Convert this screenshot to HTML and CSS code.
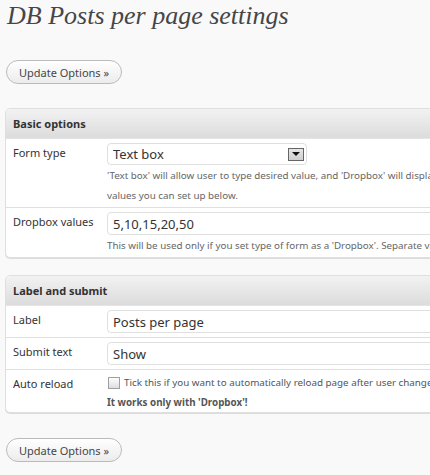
FILE: index.html
```html
<!DOCTYPE html>
<html lang="en">
<head>
  <meta charset="UTF-8" />
  <title>DB Posts per page settings</title>
  <link rel="stylesheet" href="styles.css">
</head>
<body>

<div class="wrap">
  <h2>DB Posts per page settings</h2>

  <form method="post" action="options.php">
    <p class="submit"><button type="submit" class="button">Update Options &raquo;</button></p>

    <div class="postbox">
      <h3 class="hndle">Basic options</h3>
      <table class="form-table">
        <tr>
          <th>Form type</th>
          <td>
            <div class="select-box">
              <select name="form_type">
                <option>Text box</option>
                <option>Dropbox</option>
              </select>
              <span class="select-arrow"></span>
            </div>
            <p class="description">'Text box' will allow user to type desired value, and 'Dropbox' will display list of<br>values you can set up below.</p>
          </td>
        </tr>
        <tr>
          <th>Dropbox values</th>
          <td>
            <input type="text" name="values" value="5,10,15,20,50" />
            <p class="description">This will be used only if you set type of form as a 'Dropbox'. Separate values with commas.</p>
          </td>
        </tr>
      </table>
    </div>

    <div class="postbox">
      <h3 class="hndle">Label and submit</h3>
      <table class="form-table">
        <tr>
          <th>Label</th>
          <td><input type="text" name="label" value="Posts per page" /></td>
        </tr>
        <tr>
          <th>Submit text</th>
          <td><input type="text" name="submit_text" value="Show" /></td>
        </tr>
        <tr>
          <th>Auto reload</th>
          <td>
            <label class="check"><input type="checkbox" name="auto_reload" /> Tick this if you want to automatically reload page after user changes value</label>
            <p class="note">It works only with 'Dropbox'!</p>
          </td>
        </tr>
      </table>
    </div>

    <p class="submit"><button type="submit" class="button">Update Options &raquo;</button></p>
  </form>
</div>

</body>
</html>
```

FILE: styles.css
```css
html, body {
  margin: 0;
  background: #f9f9f9;
  overflow: hidden;
}
body {
  font-family: "Noto Sans", "DejaVu Sans", sans-serif;
  font-size: 11px;
  color: #333;
}
.wrap {
  width: 760px;
  padding: 0 0 0 5px;
}
h2 {
  font-family: "Liberation Serif", Georgia, serif;
  font-style: italic;
  font-weight: normal;
  font-size: 26px;
  color: #464646;
  margin: 0;
  padding: 0 0 0 2px;
  line-height: 32px;
}
p.submit { margin: 0; }
p.submit:first-child { padding: 28px 0 24px 1px; }
.postbox + p.submit { padding: 25px 0 0 1px; }
.button {
  width: 116px;
  height: 24px;
  border: 1px solid #bbb;
  border-radius: 12px;
  background: linear-gradient(#fff, #ececec);
  font-family: "Noto Sans", sans-serif;
  font-size: 11px;
  color: #464646;
  cursor: pointer;
  padding: 0;
}
.postbox {
  background: #fff;
  border: 1px solid #dfdfdf;
  border-radius: 5px;
  box-shadow: 0 1px 0 #dcdcdc;
  overflow: hidden;
}
.postbox + .postbox { margin-top: 17px; }
.hndle {
  margin: 0;
  height: 29px;
  line-height: 29px;
  padding-left: 7px;
  font-size: 11px;
  font-weight: bold;
  color: #333;
  background: linear-gradient(#f2f2f2, #dcdcdc);
  border-bottom: 1px solid #e4e4e4;
}
.form-table {
  border-collapse: collapse;
  width: 100%;
}
.form-table th, .form-table td {
  vertical-align: top;
  border-bottom: 1px solid #dfdfdf;
}
.form-table tr:last-child th, .form-table tr:last-child td { border-bottom: none; }
.form-table th {
  width: 94px;
  text-align: left;
  font-weight: normal;
  line-height: 15px;
  padding: 6px 0 0 7px;
  color: #333;
}
.form-table td { padding: 4px 0; }
.form-table tr:last-child td { padding-bottom: 1px; }
input[type=text] {
  display: block;
  width: 500px;
  height: 23px;
  box-sizing: border-box;
  border: 1px solid #dfdfdf;
  border-radius: 4px;
  padding: 0 5px;
  font-family: "Noto Sans", sans-serif;
  font-size: 13px;
  color: #333;
  background: #fff;
}
.select-box {
  width: 200px;
  height: 22px;
  box-sizing: border-box;
  border: 1px solid #dfdfdf;
  border-radius: 4px;
  display: flex;
  align-items: center;
  justify-content: space-between;
  padding-right: 2px;
}
.select-box select {
  appearance: none;
  border: none;
  background: none;
  font-family: "Noto Sans", sans-serif;
  font-size: 13px;
  color: #333;
  padding: 0 0 0 5px;
  outline: none;
}
.select-arrow {
  width: 16px;
  height: 13px;
  box-sizing: border-box;
  border: 1px solid #666;
  background: linear-gradient(#e6e6e6, #cfcfcf);
  display: flex;
  align-items: center;
  justify-content: center;
}
.select-arrow::after {
  content: "";
  border-left: 4px solid transparent;
  border-right: 4px solid transparent;
  border-top: 4px solid #111;
}
p.description {
  margin: 1px 0 0;
  font-size: 9.8px;
  line-height: 20px;
  color: #666;
  white-space: nowrap;
}
.form-table tr:first-child p.description { margin-bottom: -3px; }
.check {
  display: flex;
  align-items: center;
  gap: 4px;
  line-height: 18px;
  font-size: 9.8px;
  color: #555;
  white-space: nowrap;
}
.check input {
  appearance: none;
  margin: 0 0 0 1px;
  width: 12px;
  height: 12px;
  border: 1px solid #a0a0a0;
  background: linear-gradient(#fdfdfd, #dedede);
}
p.note {
  margin: 3px 0 0;
  line-height: 16px;
  font-size: 9.8px;
  font-weight: bold;
  color: #555;
}
```
